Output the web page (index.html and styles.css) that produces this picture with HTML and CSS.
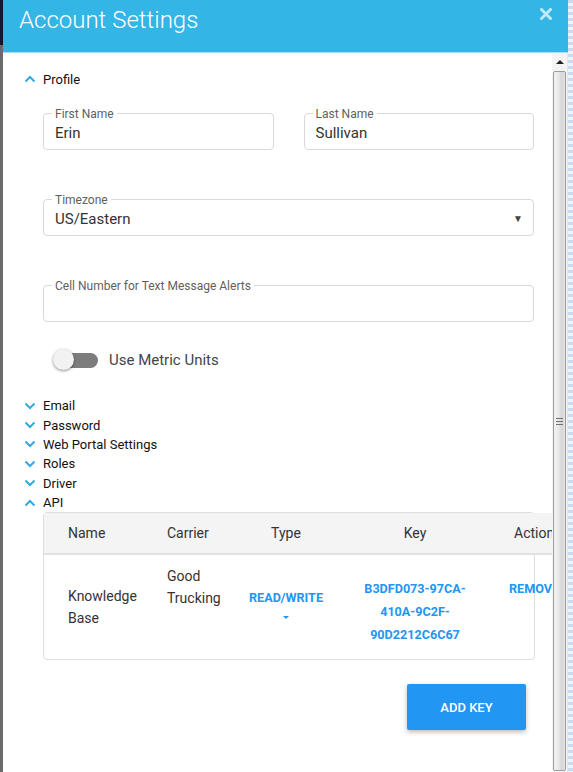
FILE: index.html
```html
<!DOCTYPE html>
<html>
<head>
<meta charset="utf-8">
<link rel="stylesheet" href="styles.css">
</head>
<body>
<div class="stage">
  <div class="backdrop-left"></div>
  <div class="modal">
    <header class="modal-header">
      <h1 class="modal-title">Account Settings</h1>
      <button class="close-btn" aria-label="Close">
        <svg width="12" height="12" viewBox="0 0 12 12"><path d="M1.5 1.5 L10.5 10.5 M10.5 1.5 L1.5 10.5" stroke="currentColor" stroke-width="3" stroke-linecap="square"/></svg>
      </button>
    </header>
    <div class="modal-body">
      <div class="content">
        <div class="acc-head">
          <svg class="chev" width="12" height="8" viewBox="0 0 12 8"><path d="M1.5 6.5 L6 2 L10.5 6.5" fill="none" stroke="currentColor" stroke-width="2"/></svg>
          <span>Profile</span>
        </div>
        <div class="profile">
          <div class="field-row two">
            <div class="field"><span class="field-label">First Name</span><span class="field-value">Erin</span></div>
            <div class="field"><span class="field-label">Last Name</span><span class="field-value">Sullivan</span></div>
          </div>
          <div class="field-row">
            <div class="field select"><span class="field-label">Timezone</span><span class="field-value">US/Eastern</span><span class="select-arrow">▼</span></div>
          </div>
          <div class="field-row">
            <div class="field"><span class="field-label">Cell Number for Text Message Alerts</span><span class="field-value"></span></div>
          </div>
          <div class="toggle-row">
            <span class="toggle"><span class="toggle-track"></span><span class="toggle-knob"></span></span>
            <span class="toggle-label">Use Metric Units</span>
          </div>
        </div>
        <div class="acc-list">
          <div class="acc-item"><svg class="chev" width="12" height="8" viewBox="0 0 12 8"><path d="M1.5 1.5 L6 6 L10.5 1.5" fill="none" stroke="currentColor" stroke-width="2"/></svg><span>Email</span></div>
          <div class="acc-item"><svg class="chev" width="12" height="8" viewBox="0 0 12 8"><path d="M1.5 1.5 L6 6 L10.5 1.5" fill="none" stroke="currentColor" stroke-width="2"/></svg><span>Password</span></div>
          <div class="acc-item"><svg class="chev" width="12" height="8" viewBox="0 0 12 8"><path d="M1.5 1.5 L6 6 L10.5 1.5" fill="none" stroke="currentColor" stroke-width="2"/></svg><span>Web Portal Settings</span></div>
          <div class="acc-item"><svg class="chev" width="12" height="8" viewBox="0 0 12 8"><path d="M1.5 1.5 L6 6 L10.5 1.5" fill="none" stroke="currentColor" stroke-width="2"/></svg><span>Roles</span></div>
          <div class="acc-item"><svg class="chev" width="12" height="8" viewBox="0 0 12 8"><path d="M1.5 1.5 L6 6 L10.5 1.5" fill="none" stroke="currentColor" stroke-width="2"/></svg><span>Driver</span></div>
          <div class="acc-item"><svg class="chev" width="12" height="8" viewBox="0 0 12 8"><path d="M1.5 6.5 L6 2 L10.5 6.5" fill="none" stroke="currentColor" stroke-width="2"/></svg><span>API</span></div>
        </div>
        <div class="api-box">
          <table class="api-table">
            <colgroup>
              <col class="c-name"><col class="c-carrier"><col class="c-type"><col class="c-key"><col class="c-action">
            </colgroup>
            <thead>
              <tr>
                <th class="th-name">Name</th>
                <th class="th-carrier">Carrier</th>
                <th class="th-type">Type</th>
                <th class="th-key">Key</th>
                <th class="th-action">Action</th>
              </tr>
            </thead>
            <tbody>
              <tr>
                <td class="td-name">Knowledge<br>Base</td>
                <td class="td-carrier">Good<br>Trucking</td>
                <td class="td-type"><span class="link">READ/WRITE</span><span class="caret"></span></td>
                <td class="td-key"><span class="link">B3DFD073-97CA-<br>410A-9C2F-<br>90D2212C6C67</span></td>
                <td class="td-action"><span class="link">REMOVE</span></td>
              </tr>
            </tbody>
          </table>
        </div>
        <div class="btn-row">
          <button class="add-btn">ADD KEY</button>
        </div>
      </div>
      <div class="scrollbar">
        <div class="sb-up"><span class="sb-arrow"></span></div>
        <div class="sb-thumb"><span class="sb-grip"></span></div>
      </div>
    </div>
  </div>
  <div class="backdrop-right"></div>
</div>
</body>
</html>
```

FILE: styles.css
```css
* { box-sizing: border-box; }
html, body {
  margin: 0;
  padding: 0;
  height: 100%;
  overflow: hidden;
  font-family: Roboto, "Liberation Sans", Arial, sans-serif;
}
.stage {
  display: flex;
  width: 573px;
  height: 772px;
  overflow: hidden;
}
.backdrop-left {
  width: 3px;
  flex: none;
  background: linear-gradient(to bottom, #0c1c2c 0, #0c1c2c 45px, #6b6b6b 45px, #6b6b6b 100%);
}
.backdrop-right {
  width: 5px;
  flex: none;
  background: repeating-linear-gradient(to bottom, #c9dcef 0, #c9dcef 3px, #eef4fa 3px, #eef4fa 6px);
}
.modal {
  width: 565px;
  flex: none;
  display: flex;
  flex-direction: column;
  background: #fff;
}
.modal-header {
  height: 53px;
  flex: none;
  background: #33b5e5;
  display: flex;
  justify-content: space-between;
  align-items: flex-start;
  padding: 0 16px 0 16px;
  border-bottom: 1px solid #a9dff3;
}
.modal-title {
  margin: 6px 0 0 0;
  font-size: 24px;
  line-height: 28px;
  font-weight: 300;
  color: #fff;
}
.close-btn {
  border: 0;
  background: none;
  padding: 0;
  margin-top: 8px;
  width: 12px;
  height: 12px;
  color: #bfe8f8;
  display: block;
}
.close-btn svg { display: block; }
.modal-body {
  flex: 1;
  display: flex;
  min-height: 0;
}
.content {
  width: 549px;
  flex: none;
  overflow: hidden;
  padding: 16px 18px 0 21px;
}
.chev {
  color: #33a9e2;
  flex: none;
  display: block;
}
.acc-head, .acc-item {
  display: flex;
  align-items: center;
  gap: 7px;
  font-size: 13px;
  color: #111;
}
.acc-head { height: 20px; }
.profile {
  padding-left: 19px;
  margin-top: 24px;
}
.field-row {
  margin-bottom: 49px;
}
.field-row.two {
  display: flex;
  gap: 30px;
}
.field-row.two .field { flex: 1; }
.field {
  position: relative;
  height: 37px;
  border: 1px solid #d9d9d9;
  border-radius: 4px;
  display: flex;
  align-items: center;
  padding: 2px 11px 0 11px;
}
.field-label {
  position: absolute;
  left: 8px;
  top: -7px;
  padding: 0 3px;
  background: #fff;
  font-size: 12px;
  line-height: 14px;
  color: #5f5f5f;
}
.field-value {
  font-size: 15px;
  line-height: 20px;
  color: #333;
  flex: 1;
}
.select-arrow {
  font-size: 10px;
  color: #444;
  margin-right: -1px;
}
.profile .field-row:nth-child(3) { margin-bottom: 26px; }
.toggle-row {
  display: flex;
  align-items: center;
  height: 24px;
  padding-left: 11px;
  gap: 11px;
}
.toggle {
  position: relative;
  width: 44px;
  height: 24px;
  flex: none;
  display: flex;
  align-items: center;
}
.toggle-track {
  display: block;
  width: 44px;
  height: 15px;
  border-radius: 8px;
  background: #7d7d7d;
}
.toggle-knob {
  position: absolute;
  left: -1px;
  top: 1px;
  width: 21px;
  height: 21px;
  border-radius: 50%;
  background: #f2f2f2;
  box-shadow: 0 1px 3px rgba(0,0,0,0.45);
}
.toggle-label {
  font-size: 15px;
  color: #444;
}
.acc-list {
  margin-top: 24px;
}
.acc-item {
  height: 19.4px;
}
.api-box {
  margin: 0 0 0 19px;
  border: 1px solid #dedede;
  border-radius: 4px;
  width: 492px;
}
.api-table {
  border-collapse: collapse;
  table-layout: fixed;
  width: 538px;
}
.c-name { width: 100px; }
.c-carrier { width: 100px; }
.c-type { width: 84px; }
.c-key { width: 174px; }
.c-action { width: 80px; }
.api-table th {
  background: #f4f4f4;
  height: 41px;
  border-bottom: 2px solid #e2e2e2;
  font-size: 14px;
  font-weight: 400;
  color: #333;
  text-align: left;
  padding: 0;
}
.th-name { padding-left: 24px !important; }
.th-carrier { padding-left: 23px !important; }
.th-type, .th-key { text-align: center !important; }
.th-action { padding-left: 12px !important; white-space: nowrap; }
.api-table td {
  height: 105px;
  font-size: 14px;
  line-height: 22px;
  color: #333;
  padding: 0;
  vertical-align: top;
}
.td-name { vertical-align: middle !important; padding-left: 24px !important; }
.td-carrier { padding: 10px 0 0 23px !important; }
.td-type { text-align: center; padding-top: 32px !important; }
.td-key { text-align: center; padding-top: 22px !important; }
.td-action { padding: 22px 0 0 7px !important; white-space: nowrap; }
.link {
  color: #2196f3;
  font-size: 12.6px;
  font-weight: 700;
  line-height: 22px;
}
.td-type .link { display: block; }
.caret {
  display: inline-block;
  width: 0;
  height: 0;
  border-top: 3px solid #2196f3;
  border-left: 3px solid transparent;
  border-right: 3px solid transparent;
  vertical-align: top;
  margin-top: 7px;
}
.btn-row {
  display: flex;
  justify-content: flex-end;
  padding-right: 8px;
  margin-top: 24px;
}
.add-btn {
  width: 119px;
  height: 46px;
  border: 0;
  border-radius: 2px;
  background: #2196f3;
  color: #fff;
  font-family: Roboto, "Liberation Sans", Arial, sans-serif;
  font-size: 13px;
  font-weight: 500;
  box-shadow: 0 2px 5px rgba(0,0,0,0.28);
}
.scrollbar {
  width: 16px;
  flex: none;
  background: #f4f4f4;
  border-right: 1px solid #e6e6e6;
  display: flex;
  flex-direction: column;
  padding: 0 1px 1px 1px;
}
.sb-up {
  height: 18px;
  flex: none;
  display: flex;
  align-items: center;
  justify-content: center;
}
.sb-arrow {
  width: 0;
  height: 0;
  border-bottom: 4px solid #222;
  border-left: 4px solid transparent;
  border-right: 4px solid transparent;
}
.sb-thumb {
  flex: 1;
  border: 1px solid #9c9c9c;
  border-radius: 2px;
  background: linear-gradient(to right, #f3f3f3 0%, #e9e9e9 40%, #d6d6d6 70%, #e4e4e4 100%);
  display: flex;
  align-items: center;
  justify-content: center;
}
.sb-grip {
  width: 7px;
  height: 7px;
  background: repeating-linear-gradient(to bottom, #6e6e6e 0, #6e6e6e 1px, transparent 1px, transparent 3px);
}
```
